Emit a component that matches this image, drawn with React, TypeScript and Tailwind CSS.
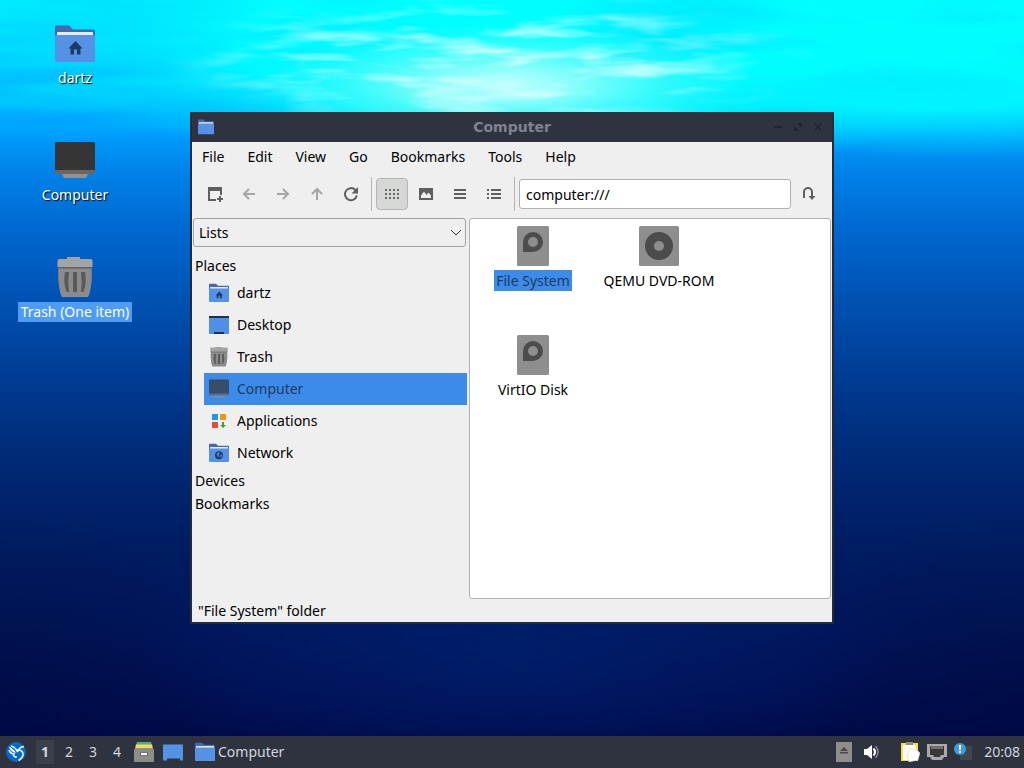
import React from 'react';

interface IconProps {
  className?: string;
}

interface FolderIconProps extends IconProps {
  emblem?: 'home' | 'globe';
}

const menuItems = ['File', 'Edit', 'View', 'Go', 'Bookmarks', 'Tools', 'Help'];

/* Wallpaper */

const Wallpaper: React.FC = () => (
  <svg
    className="absolute inset-0 h-full w-full"
    viewBox="0 0 1024 768"
    preserveAspectRatio="none"
    aria-hidden="true"
  >
    <defs>
      <linearGradient id="water" x1="0" y1="0" x2="0" y2="1">
        <stop offset="0" stopColor="#00e6ff" />
        <stop offset="0.08" stopColor="#00ccff" />
        <stop offset="0.14" stopColor="#00b0ff" />
        <stop offset="0.176" stopColor="#009cfc" />
        <stop offset="0.22" stopColor="#0084ea" />
        <stop offset="0.3" stopColor="#0068d0" />
        <stop offset="0.39" stopColor="#0052b2" />
        <stop offset="0.49" stopColor="#003c94" />
        <stop offset="0.56" stopColor="#003080" />
        <stop offset="0.64" stopColor="#00246e" />
        <stop offset="0.72" stopColor="#001c60" />
        <stop offset="0.83" stopColor="#00155a" />
        <stop offset="0.96" stopColor="#000a4a" />
      </linearGradient>
      <radialGradient id="cyanGlow">
        <stop offset="0" stopColor="#00ffff" />
        <stop offset="0.6" stopColor="#00ffff" stopOpacity="0.85" />
        <stop offset="1" stopColor="#00e0ff" stopOpacity="0" />
      </radialGradient>
      <radialGradient id="sun">
        <stop offset="0" stopColor="#c8ffff" />
        <stop offset="0.3" stopColor="#98fffa" stopOpacity="0.85" />
        <stop offset="1" stopColor="#40fff8" stopOpacity="0" />
      </radialGradient>
      <radialGradient id="deep">
        <stop offset="0" stopColor="#00287c" stopOpacity="0.5" />
        <stop offset="1" stopColor="#00287c" stopOpacity="0" />
      </radialGradient>
      <radialGradient id="corner">
        <stop offset="0" stopColor="#000634" stopOpacity="0.35" />
        <stop offset="1" stopColor="#000634" stopOpacity="0" />
      </radialGradient>
      <radialGradient id="fadeCenter">
        <stop offset="0" stopColor="#fff" />
        <stop offset="0.5" stopColor="#fff" stopOpacity="0.7" />
        <stop offset="1" stopColor="#fff" stopOpacity="0" />
      </radialGradient>
      <linearGradient id="fadeDown" x1="0" y1="0" x2="0" y2="1">
        <stop offset="0" stopColor="#fff" />
        <stop offset="0.5" stopColor="#fff" stopOpacity="0.7" />
        <stop offset="0.85" stopColor="#fff" stopOpacity="0" />
      </linearGradient>
      <mask id="centerMask">
        <ellipse cx="490" cy="60" rx="330" ry="75" fill="url(#fadeCenter)" />
      </mask>
      <mask id="topMask">
        <rect width="1024" height="170" fill="url(#fadeDown)" />
      </mask>
      <filter id="whiteRipples" x="0" y="0" width="100%" height="100%">
        <feTurbulence type="fractalNoise" baseFrequency="0.012 0.065" numOctaves="3" seed="8" />
        <feColorMatrix values="0 0 0 0 0.78  0 0 0 0 1  0 0 0 0 1  3 0 0 0 -1.35" />
      </filter>
      <filter id="cyanRipples" x="0" y="0" width="100%" height="100%">
        <feTurbulence type="fractalNoise" baseFrequency="0.005 0.045" numOctaves="2" seed="21" />
        <feColorMatrix values="0 0 0 0 0  0 0 0 0 0.98  0 0 0 0 1  2.5 0 0 0 -1" />
      </filter>
      <filter id="darkRipples" x="0" y="0" width="100%" height="100%">
        <feTurbulence type="fractalNoise" baseFrequency="0.005 0.04" numOctaves="2" seed="4" />
        <feColorMatrix values="0 0 0 0 0  0 0 0 0 0.78  0 0 0 0 1  3 0 0 0 -1.4" />
      </filter>
    </defs>
    <rect width="1024" height="768" fill="url(#water)" />
    <ellipse cx="540" cy="40" rx="500" ry="140" fill="url(#cyanGlow)" />
    <ellipse cx="960" cy="30" rx="400" ry="130" fill="url(#cyanGlow)" />
    <g mask="url(#topMask)">
      <rect width="1024" height="170" filter="url(#cyanRipples)" opacity="0.7" />
      <rect width="1024" height="170" filter="url(#darkRipples)" opacity="0.7" />
    </g>
    <ellipse cx="505" cy="85" rx="250" ry="62" fill="url(#sun)" />
    <g mask="url(#centerMask)">
      <rect width="1024" height="170" filter="url(#whiteRipples)" />
    </g>
    <ellipse cx="510" cy="660" rx="380" ry="130" fill="url(#deep)" />
    <ellipse cx="0" cy="690" rx="240" ry="180" fill="url(#corner)" />
    <ellipse cx="1024" cy="690" rx="240" ry="180" fill="url(#corner)" />
  </svg>
);

/* Places, devices and launchers */

const FolderIcon: React.FC<FolderIconProps> = ({ className, emblem }) => (
  <svg className={className} viewBox="0 0 40 40" aria-hidden="true">
    <path d="M0 3a1.500 1.500 0 0 1 1.500-1.500H14l4 4h20.500A1.500 1.500 0 0 1 40 7v12H0z" fill="#4668ae" />
    <path d="M2 9a1 1 0 0 1 1-1h34a1 1 0 0 1 1 1v8H2z" fill="#e6eaf4" />
    <path d="M0 12.500a1.500 1.500 0 0 1 1.500-1.500h37a1.500 1.500 0 0 1 1.500 1.500V36.500a1.500 1.500 0 0 1-1.500 1.500h-37A1.500 1.500 0 0 1 0 36.500z" fill="#5592e6" />
    {emblem === 'home' && (
      <path d="M20.500 17 13.500 24.500H15.500V30.500H19V25.500H22V30.500H25.500V24.500H27.500z" fill="#1c3a66" />
    )}
    {emblem === 'globe' && (
      <>
        <circle cx="20" cy="24.500" r="8" fill="#1c3f70" />
        <path d="M15 21.500l5-3 1.500 2.500-3 2 2 2.500-2 3-2-3.500zM23 24l3.500-1-1 4.500-3 1z" fill="#5592e6" />
      </>
    )}
  </svg>
);

const ComputerIcon: React.FC<IconProps> = ({ className }) => (
  <svg className={className} viewBox="0 0 40 40" aria-hidden="true">
    <path d="M7 33h26l-2 4H9z" fill="#929292" />
    <rect y="1" width="40" height="32" rx="1.500" fill="#6b6663" />
    <path d="M0 2.500A1.500 1.500 0 0 1 1.500 1h37A1.500 1.500 0 0 1 40 2.500V29H0z" fill="#353535" />
  </svg>
);

const TrashIcon: React.FC<IconProps> = ({ className }) => (
  <svg className={className} viewBox="0 0 40 40" aria-hidden="true">
    <path d="M3.500 9h33q1 12-1 22-1 6-2.500 8H7q-1.500-2-2.500-8-2-10-1-22z" fill="#8b8b8b" />
    <path d="M3 8.500h34l-1 2H4z" fill="#626262" />
    <path d="M12-1h13v2h10.500A2 2 0 0 1 37.500 3v6h-35V3a2 2 0 0 1 2-2H12z" fill="#a3a3a3" />
    <path d="M10 14h4q-1.500 10 0 20h-2.500q-3.500-10-1.500-20zM18 14h4v20h-4zM30 14h-4q1.500 10 0 20h2.500q3.500-10 1.500-20z" fill="#5a5a5a" />
  </svg>
);

const DesktopIcon: React.FC<IconProps> = ({ className }) => (
  <svg className={className} viewBox="0 0 20 20" aria-hidden="true">
    <rect y="1" width="20" height="18" rx="0.500" fill="#4f8fe6" />
    <path d="M0 1h20v2H0zM5 17h10v2H5z" fill="#1d3153" />
  </svg>
);

const ApplicationsIcon: React.FC<IconProps> = ({ className }) => (
  <svg className={className} viewBox="0 0 20 20" aria-hidden="true">
    <rect x="3" y="3" width="6" height="6" fill="#169fe8" />
    <rect x="11" y="3" width="6" height="6" fill="#f39517" />
    <rect x="3" y="11" width="6" height="6" fill="#e5493f" />
    <path d="M13 11h2v3h2l-3 3-3-3h2z" fill="#4c9c3a" />
  </svg>
);

const DiskIcon: React.FC<IconProps> = ({ className }) => (
  <svg className={className} viewBox="0 0 40 40" aria-hidden="true">
    <rect x="4" width="32" height="40" rx="1.500" fill="#8e8e8e" />
    <path d="M10 26V16a10 10 0 1 1 10 10z" fill="#4c4c4c" />
    <circle cx="20" cy="16" r="5" fill="#8e8e8e" />
  </svg>
);

const OpticalIcon: React.FC<IconProps> = ({ className }) => (
  <svg className={className} viewBox="0 0 40 40" aria-hidden="true">
    <rect width="40" height="40" rx="1.500" fill="#8e8e8e" />
    <circle cx="20" cy="20" r="14" fill="#4c4c4c" />
    <circle cx="20" cy="20" r="5" fill="#8e8e8e" />
  </svg>
);

/* Toolbar */

const NewTabIcon = () => (
  <svg className="size-4" viewBox="0 0 16 16" aria-hidden="true">
    <path d="M1 1h14v8h-2V5H3v8h6v2H1z" fill="#5f5f5f" />
    <path d="M12 10h2v2h2v2h-2v2h-2v-2h-2v-2h2z" fill="#5f5f5f" />
  </svg>
);

const BackIcon = () => (
  <svg className="size-4" viewBox="0 0 16 16" fill="none" stroke="#a6a6a6" strokeWidth="2" aria-hidden="true">
    <path d="M14 8H3.500M8 3 3 8l5 5" />
  </svg>
);

const ForwardIcon = () => (
  <svg className="size-4" viewBox="0 0 16 16" fill="none" stroke="#a6a6a6" strokeWidth="2" aria-hidden="true">
    <path d="M2 8h10.500M8 3l5 5-5 5" />
  </svg>
);

const UpIcon = () => (
  <svg className="size-4" viewBox="0 0 16 16" fill="none" stroke="#a6a6a6" strokeWidth="2" aria-hidden="true">
    <path d="M8 14V3.500M3 8l5-5 5 5" />
  </svg>
);

const ReloadIcon = () => (
  <svg className="size-4" viewBox="0 0 16 16" aria-hidden="true">
    <path d="M12.500 4.200A6 6 0 1 0 13.800 9.500" fill="none" stroke="#5f5f5f" strokeWidth="2" />
    <path d="M15 1v6.500H8.500z" fill="#5f5f5f" />
  </svg>
);

const GridIcon = () => (
  <svg className="size-4" viewBox="0 0 16 16" aria-hidden="true">
    {[3, 7, 11].map(y =>
      [1, 5, 9, 13].map(x => <rect key={`${x}-${y}`} x={x} y={y} width="2" height="2" fill="#6a6a6a" />)
    )}
  </svg>
);

const ThumbnailIcon = () => (
  <svg className="size-4" viewBox="0 0 16 16" aria-hidden="true">
    <path fillRule="evenodd" d="M1 2h14v12H1zM3 12h10V9.500L10.500 6.500 8.500 9 6 5.500 3 9.500z" fill="#5f5f5f" />
  </svg>
);

const CompactIcon = () => (
  <svg className="size-4" viewBox="0 0 16 16" aria-hidden="true">
    <path d="M2 3h12v2H2zM2 7h12v2H2zM2 11h12v2H2z" fill="#5f5f5f" />
  </svg>
);

const DetailsIcon = () => (
  <svg className="size-4" viewBox="0 0 16 16" aria-hidden="true">
    <path d="M1 3h2v2H1zM5 3h10v2H5zM1 7h2v2H1zM5 7h10v2H5zM1 11h2v2H1zM5 11h10v2H5z" fill="#5f5f5f" />
  </svg>
);

const GoIcon = () => (
  <svg className="size-4" viewBox="0 0 16 16" aria-hidden="true">
    <path d="M3 12V6a4 4 0 0 1 8 0v5" fill="none" stroke="#5f5f5f" strokeWidth="2" />
    <path d="M7.500 10h7L11 14z" fill="#5f5f5f" />
  </svg>
);

interface ToolButtonProps {
  label: string;
  checked?: boolean;
  children: React.ReactNode;
}

const ToolButton: React.FC<ToolButtonProps> = ({ label, checked, children }) => (
  <button
    type="button"
    aria-label={label}
    aria-pressed={checked}
    className={
      checked
        ? 'flex h-8 w-8 shrink-0 items-center justify-center rounded-sm border border-[#b4b6b4] bg-[#d6d8d6]'
        : 'flex h-8 w-8 shrink-0 items-center justify-center'
    }
  >
    {children}
  </button>
);

const places = [
  { name: 'dartz', icon: <FolderIcon className="size-5" emblem="home" /> },
  { name: 'Desktop', icon: <DesktopIcon className="size-5" /> },
  { name: 'Trash', icon: <TrashIcon className="size-5" /> },
  { name: 'Computer', icon: <ComputerIcon className="size-5 opacity-70" />, selected: true },
  { name: 'Applications', icon: <ApplicationsIcon className="size-5" /> },
  { name: 'Network', icon: <FolderIcon className="size-5" emblem="globe" /> },
];

const files = [
  { name: 'File System', icon: <DiskIcon className="size-10" />, selected: true },
  { name: 'QEMU DVD-ROM', icon: <OpticalIcon className="size-10" /> },
  { name: 'VirtIO Disk', icon: <DiskIcon className="size-10" /> },
];

const shortcuts = [
  { name: 'dartz', icon: <FolderIcon className="size-10" emblem="home" /> },
  { name: 'Computer', icon: <ComputerIcon className="size-10" /> },
  { name: 'Trash (One item)', icon: <TrashIcon className="size-10 overflow-visible" />, selected: true },
];

const TitleBar: React.FC = () => (
  <header className="flex h-[30px] items-center bg-[#2f323f] px-1.5">
    <div className="flex flex-1">
      <FolderIcon className="size-4" />
    </div>
    <h1 className="font-['DejaVu_Sans',sans-serif] text-[14px] font-bold text-[#80838d]">Computer</h1>
    <div className="flex flex-1 justify-end gap-1 text-[#20222c]">
      <button type="button" aria-label="Minimize" className="size-4">
        <svg viewBox="0 0 16 16" stroke="currentColor" strokeWidth="1.500">
          <path d="M4 8h8" />
        </svg>
      </button>
      <button type="button" aria-label="Maximize" className="size-4">
        <svg viewBox="0 0 16 16" fill="currentColor">
          <path d="M7 4h5v5zM4 7v5h5z" />
        </svg>
      </button>
      <button type="button" aria-label="Close" className="size-4">
        <svg viewBox="0 0 16 16" stroke="currentColor" strokeWidth="1.500">
          <path d="m5 5 6 6M11 5l-6 6" />
        </svg>
      </button>
    </div>
  </header>
);

const Toolbar: React.FC = () => (
  <div className="flex h-[34px] items-center gap-0.5 px-[7px]">
    <ToolButton label="New Tab"><NewTabIcon /></ToolButton>
    <ToolButton label="Back"><BackIcon /></ToolButton>
    <ToolButton label="Forward"><ForwardIcon /></ToolButton>
    <ToolButton label="Up"><UpIcon /></ToolButton>
    <ToolButton label="Reload"><ReloadIcon /></ToolButton>
    <div className="mx-0.5 h-full w-px bg-[#b5b5b5]" />
    <ToolButton label="Icon View" checked><GridIcon /></ToolButton>
    <ToolButton label="Thumbnail View"><ThumbnailIcon /></ToolButton>
    <ToolButton label="Compact View"><CompactIcon /></ToolButton>
    <ToolButton label="Detailed List"><DetailsIcon /></ToolButton>
    <div className="mx-0.5 h-full w-px bg-[#b5b5b5]" />
    <input
      type="text"
      aria-label="Location"
      defaultValue="computer:///"
      className="h-[30px] min-w-0 flex-1 rounded-[3px] border border-[#b0b2b0] bg-white px-1.5 text-black outline-none"
    />
    <ToolButton label="Go"><GoIcon /></ToolButton>
  </div>
);

const SidePane: React.FC = () => (
  <aside className="flex w-[275px] shrink-0 flex-col pl-px">
    <div className="relative mr-px">
      <select
        aria-label="Side pane mode"
        className="block h-[29px] w-full appearance-none rounded-[3px] border border-[#a2a4a2] bg-[#efefef] px-[5px] text-black"
      >
        <option>Lists</option>
      </select>
      <svg className="pointer-events-none absolute top-2 right-1 size-3" viewBox="0 0 12 12" fill="none" stroke="#3c3c3c" aria-hidden="true">
        <path d="m1 4 5 5 5-5" />
      </svg>
    </div>

    <div className="mt-[7px]">
      <h2 className="px-0.5 leading-[23px]">Places</h2>
      <ul className="pl-[11px]">
        {places.map(place => (
          <li key={place.name}>
            <button
              type="button"
              className={
                place.selected
                  ? 'flex h-8 w-full items-center gap-2 bg-[#3d8be8] pl-[5px] text-[#1f3a5f]'
                  : 'flex h-8 w-full items-center gap-2 pl-[5px]'
              }
            >
              {place.icon}
              <span className="leading-[22px]">{place.name}</span>
            </button>
          </li>
        ))}
      </ul>
      <h2 className="px-0.5 leading-[23px]">Devices</h2>
      <h2 className="px-0.5 leading-[23px]">Bookmarks</h2>
    </div>
  </aside>
);

const FileManager: React.FC = () => (
  <section className="absolute top-28 left-[190px] w-[644px] border-x-2 border-b-2 border-[#232a3c] bg-[#efefef] text-black">
    <TitleBar />

    <nav className="flex h-[30px] items-center gap-[23px] pl-2.5">
      {menuItems.map(item => (
        <button key={item} type="button">{item}</button>
      ))}
    </nav>

    <div className="pt-[5px] pb-[7px]">
      <Toolbar />
    </div>

    <div className="flex min-h-[381px]">
      <SidePane />
      <main className="mr-px ml-0.5 flex-1 rounded-[3px] border border-[#b0b2b0] bg-white">
        <ul className="flex flex-wrap">
          {files.map(file => (
            <li key={file.name} className="flex h-[109px] w-[126px] flex-col items-center gap-1 pt-[7px]">
              {file.icon}
              <span className={file.selected ? 'bg-[#3d8be8] px-0.5 leading-[21px] text-[#1f3a5f]' : 'px-0.5 leading-[21px]'}>
                {file.name}
              </span>
            </li>
          ))}
        </ul>
      </main>
    </div>

    <footer className="h-[23px] px-1.5 leading-6">"File System" folder</footer>
  </section>
);

const Taskbar: React.FC = () => (
  <footer className="relative flex h-8 items-center bg-[#2f323f] pr-1 pl-1.5 text-[#d3d6df]">
    <button type="button" aria-label="Application menu" className="size-5">
      <svg viewBox="0 0 20 20">
        <circle cx="10" cy="10" r="10" fill="#0868c8" />
        <path d="M3 4.500q1 5.500 7 6.500-2-4-7-6.500z" fill="#e8f4ff" />
        <path
          d="M3 8q1 4 6 4M5 4q5 1.500 6.500 6M18 4.500q-5 .5-6.500 5.500M11 8q5-.5 6 3.500.5 4-4.500 7M7 12.500q1 3 4 2.500"
          fill="none"
          stroke="#e8f4ff"
          strokeWidth="1.500"
        />
      </svg>
    </button>
    <div className="ml-[7px] flex">
      <button type="button" className="h-8 w-6 font-bold">
        <span className="mx-auto flex h-6 w-[18px] items-center justify-center bg-[#3b3e4b]">1</span>
      </button>
      <button type="button" className="h-8 w-6">2</button>
      <button type="button" className="h-8 w-6">3</button>
      <button type="button" className="h-8 w-6">4</button>
    </div>
    <button type="button" aria-label="File manager" className="ml-[5px] size-5">
      <svg viewBox="0 0 20 20">
        <path d="M3 0h14l1 4H2z" fill="#45b18b" />
        <path d="M2 2.500h16l1 4H1z" fill="#f3dc5b" />
        <path d="M1 6h18l1 2v11a1 1 0 0 1-1 1H1a1 1 0 0 1-1-1V8z" fill="#8d8d87" />
        <rect x="6" y="10.500" width="8" height="3" rx="0.500" fill="#5e5e5a" />
        <rect x="7" y="11" width="6" height="2" fill="#fff" />
      </svg>
    </button>
    <button type="button" aria-label="Show desktop" className="ml-[9px] size-5">
      <svg viewBox="0 0 20 20">
        <path d="M0 2.500h20v16h-3v-2H4v2H0z" fill="#5294e2" />
      </svg>
    </button>
    <button type="button" className="ml-3 flex items-center gap-[3px]">
      <FolderIcon className="size-5" />
      <span className="leading-[22px]">Computer</span>
    </button>

    <div className="ml-auto flex items-center">
      <button type="button" aria-label="Removable media" className="h-5 w-4">
        <svg viewBox="0 0 16 20">
          <rect width="16" height="20" rx="0.500" fill="#8e8e8e" />
          <path d="M8 5l4 4H4zM4 10h8v1.500H4z" fill="#484848" />
        </svg>
      </button>
      <button type="button" aria-label="Volume" className="ml-3 size-4">
        <svg viewBox="0 0 16 16">
          <path d="M0 5h3l5-4v14l-5-4H0z" fill="#fff" />
          <path d="M9.500 4.500q3 3.500 0 7" fill="none" stroke="#fff" strokeWidth="2" />
          <path d="M11.500 2q5 6 0 12" fill="none" stroke="#83858d" strokeWidth="1.500" />
        </svg>
      </button>
      <button type="button" aria-label="Clipboard" className="ml-5 size-5">
        <svg viewBox="0 0 20 20">
          <path d="M1 1h17v18H1z" fill="#eee14c" />
          <path d="M3 3h13v15H3z" fill="#fffdf0" />
          <path d="M6 0h7v3H6z" fill="#8e8e7c" />
          <path d="M10 6l7 2 3 3-2 7-9 2-2-6z" fill="#fff" stroke="#c9c9c0" strokeWidth="0.500" />
        </svg>
      </button>
      <button type="button" aria-label="Wired network" className="ml-[7px] size-5">
        <svg viewBox="0 0 20 20">
          <path d="M0 2h20v13h-3l-2 3H5l-2-3H0z" fill="#a9a9a9" />
          <path d="M3 4h14v9h-3l-1 2H7l-1-2H3z" fill="#383838" />
          <path d="M5 4v3M7 4v3M9 4v3M11 4v3M13 4v3M15 4v3" stroke="#a9a9a9" />
        </svg>
      </button>
      <button type="button" aria-label="Updates available" className="ml-[7px] size-5">
        <svg viewBox="0 0 20 20">
          <path d="M6 4h12v14H6z" fill="#3f464d" />
          <circle cx="6" cy="7" r="6" fill="#3c9bdd" />
          <path d="M5 3h2v5H5zM5 9h2v2H5z" fill="#fff" />
        </svg>
      </button>
      <time className="ml-2.5 leading-[22px]">20:08</time>
    </div>
  </footer>
);

const App: React.FC = () => {
  return (
    <div className="relative flex min-h-screen flex-col overflow-hidden bg-[#001a66] font-['Noto_Sans','Open_Sans',sans-serif] text-[14px] leading-5">
      <Wallpaper />

      <div className="relative flex-1">
        <ul className="flex w-[150px] flex-col pt-6 text-white">
          {shortcuts.map(shortcut => (
            <li key={shortcut.name} className="flex h-[117px] flex-col items-center gap-1">
              {shortcut.icon}
              <span
                className={
                  shortcut.selected
                    ? 'bg-[#4f9cf5] px-[3px]'
                    : 'px-[3px] [text-shadow:1px_1px_1px_#000000]'
                }
              >
                {shortcut.name}
              </span>
            </li>
          ))}
        </ul>

        <FileManager />
      </div>

      <Taskbar />
    </div>
  );
};

export default App;
